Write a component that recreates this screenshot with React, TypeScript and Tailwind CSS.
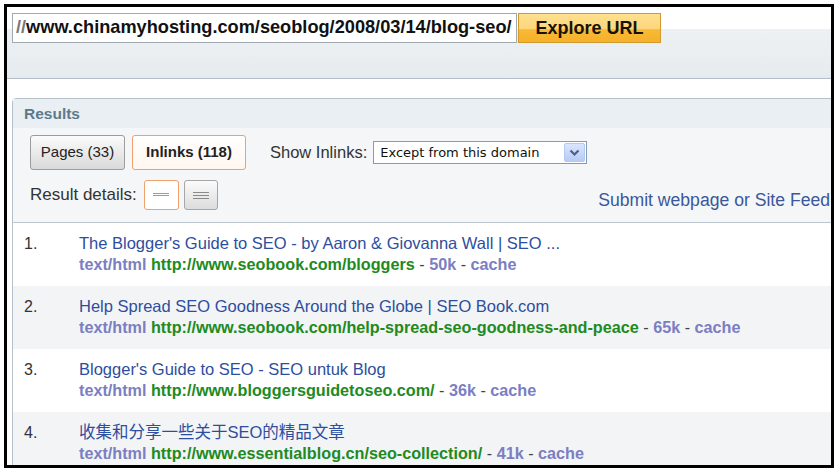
import React from 'react';

const results = [
  {
    title: "The Blogger's Guide to SEO - by Aaron & Giovanna Wall | SEO ...",
    url: 'http://www.seobook.com/bloggers',
    size: '50k',
  },
  {
    title: 'Help Spread SEO Goodness Around the Globe | SEO Book.com',
    url: 'http://www.seobook.com/help-spread-seo-goodness-and-peace',
    size: '65k',
  },
  {
    title: "Blogger's Guide to SEO - SEO untuk Blog",
    url: 'http://www.bloggersguidetoseo.com/',
    size: '36k',
  },
  {
    title: '收集和分享一些关于SEO的精品文章',
    url: 'http://www.essentialblog.cn/seo-collection/',
    size: '41k',
  },
];

function ResultRow({ idx, item }: { idx: number; item: (typeof results)[number] }) {
  return (
    <div
      className={`flex h-[63px] pt-[10px] pl-[11px] leading-[21px] ${
        idx % 2 === 1 ? 'bg-[#f3f4f6]' : 'bg-white'
      }`}
    >
      <div className="w-[55px] text-[16px] text-[#333]">{idx + 1}.</div>
      <div className="flex flex-col whitespace-nowrap">
        <div className="text-[16.5px] text-[#2d4e9e]">{item.title}</div>
        <div className="text-[16.2px] font-bold">
          <span className="text-[#7b7ec2]">text/html</span>{' '}
          <span className="text-[#218a21]">{item.url}</span>
          <span className="font-normal text-[#444]"> - </span>
          <span className="text-[#7b7ec2]">{item.size}</span>
          <span className="font-normal text-[#444]"> - </span>
          <span className="text-[#7b7ec2]">cache</span>
        </div>
      </div>
    </div>
  );
}

export default function App() {
  return (
    <div className="h-[471px] w-[838px] bg-white pl-[4px] pt-[4px] font-['Liberation_Sans','Noto_Sans_CJK_SC',sans-serif]">
      <div className="flex h-[464px] w-[830px] flex-col overflow-hidden border-[3px] border-black">
        {/* url bar */}
        <div className="h-[72px] shrink-0 border-b border-[#b3bec7] bg-[linear-gradient(to_bottom,#ffffff_0px,#ffffff_22px,#edf1f4_22px,#e6ebef_100%)] pl-[5px] pt-[6px]">
          <div className="flex h-[30px]">
            <div className="flex w-[505px] items-center border border-[#a2a9b0] bg-white pl-[3px] text-[18.2px] font-bold whitespace-nowrap text-[#111]">
              <span className="text-[#777]">//</span>www.chinamyhosting.com/seoblog/2008/03/14/blog-seo/
            </div>
            <button className="ml-[1px] flex w-[143px] items-center justify-center border border-[#d19a2e] bg-[linear-gradient(to_bottom,#fee08e_0%,#fdd67c_52%,#f8b936_56%,#f6b02a_100%)] text-[18px] font-bold text-[#1a1200]">
              Explore URL
            </button>
          </div>
        </div>

        {/* results panel */}
        <div className="ml-[5px] mt-[19px] w-[830px] shrink-0 rounded-tl-[4px] border border-[#b5c1ca]">
          <div className="flex h-[29px] items-center bg-[#eaeff3] pl-[11px] text-[15.5px] font-bold text-[#5d7a8c]">
            Results
          </div>
          <div className="border-b border-[#bcc6ce] bg-[#f4f6f8] pl-[17px] pr-[11px] pt-[7px] pb-[12px]">
            <div className="flex h-[35px] items-center">
              <button className="h-[35px] w-[95px] rounded-[3px] border border-[#9c9c9c] bg-[linear-gradient(to_bottom,#fbfbfb,#d9d9d9)] text-[15px] text-[#222]">
                Pages (33)
              </button>
              <button className="ml-[7px] h-[35px] w-[114px] rounded-[3px] border border-[#f0a06c] bg-[linear-gradient(to_bottom,#ffffff,#fff6ef)] text-[15px] font-bold text-[#222]">
                Inlinks (118)
              </button>
              <span className="ml-[24px] text-[16.5px] text-[#333]">Show Inlinks:</span>
              <div className="ml-[6px] flex h-[23px] w-[214px] items-center border border-[#7f9db9] bg-white pl-[6px] pr-[1px] font-['DejaVu_Sans',sans-serif] text-[13px] text-[#111]">
                <span className="flex-1">Except from this domain</span>
                <span className="flex h-[19px] w-[21px] items-center justify-center rounded-[2px] border border-[#b5c8f2] bg-[linear-gradient(to_bottom,#dae5fd,#b8cbf7)]">
                  <svg width="11" height="8" viewBox="0 0 11 8">
                    <path d="M1.5 1.5 L5.5 5.5 L9.5 1.5" fill="none" stroke="#4d6185" strokeWidth="2.2" />
                  </svg>
                </span>
              </div>
            </div>
            <div className="mt-[10px] flex h-[30px] items-center">
              <span className="text-[17px] text-[#333]">Result details:</span>
              <button className="ml-[7px] flex h-[30px] w-[35px] items-center justify-center rounded-[3px] border border-[#f0a06c] bg-white">
                <svg width="16" height="6" viewBox="0 0 16 6">
                  <rect x="0" y="1" width="16" height="1" fill="#9a9a9a" />
                  <rect x="0" y="3" width="16" height="1" fill="#9a9a9a" />
                </svg>
              </button>
              <button className="ml-[5px] flex h-[30px] w-[34px] items-center justify-center rounded-[3px] border border-[#a6a6a6] bg-[linear-gradient(to_bottom,#fbfbfb,#dcdcdc)]">
                <svg width="16" height="9" viewBox="0 0 16 9">
                  <rect x="0" y="1" width="16" height="1" fill="#8a8a8a" />
                  <rect x="0" y="4" width="16" height="1" fill="#8a8a8a" />
                  <rect x="0" y="7" width="16" height="1" fill="#8a8a8a" />
                </svg>
              </button>
              <span className="ml-auto mt-[10px] text-[17.6px] whitespace-nowrap text-[#3a589a]">
                Submit webpage or Site Feed
              </span>
            </div>
          </div>
          {results.map((item, idx) => (
            <ResultRow key={idx} idx={idx} item={item} />
          ))}
        </div>
      </div>
    </div>
  );
}
